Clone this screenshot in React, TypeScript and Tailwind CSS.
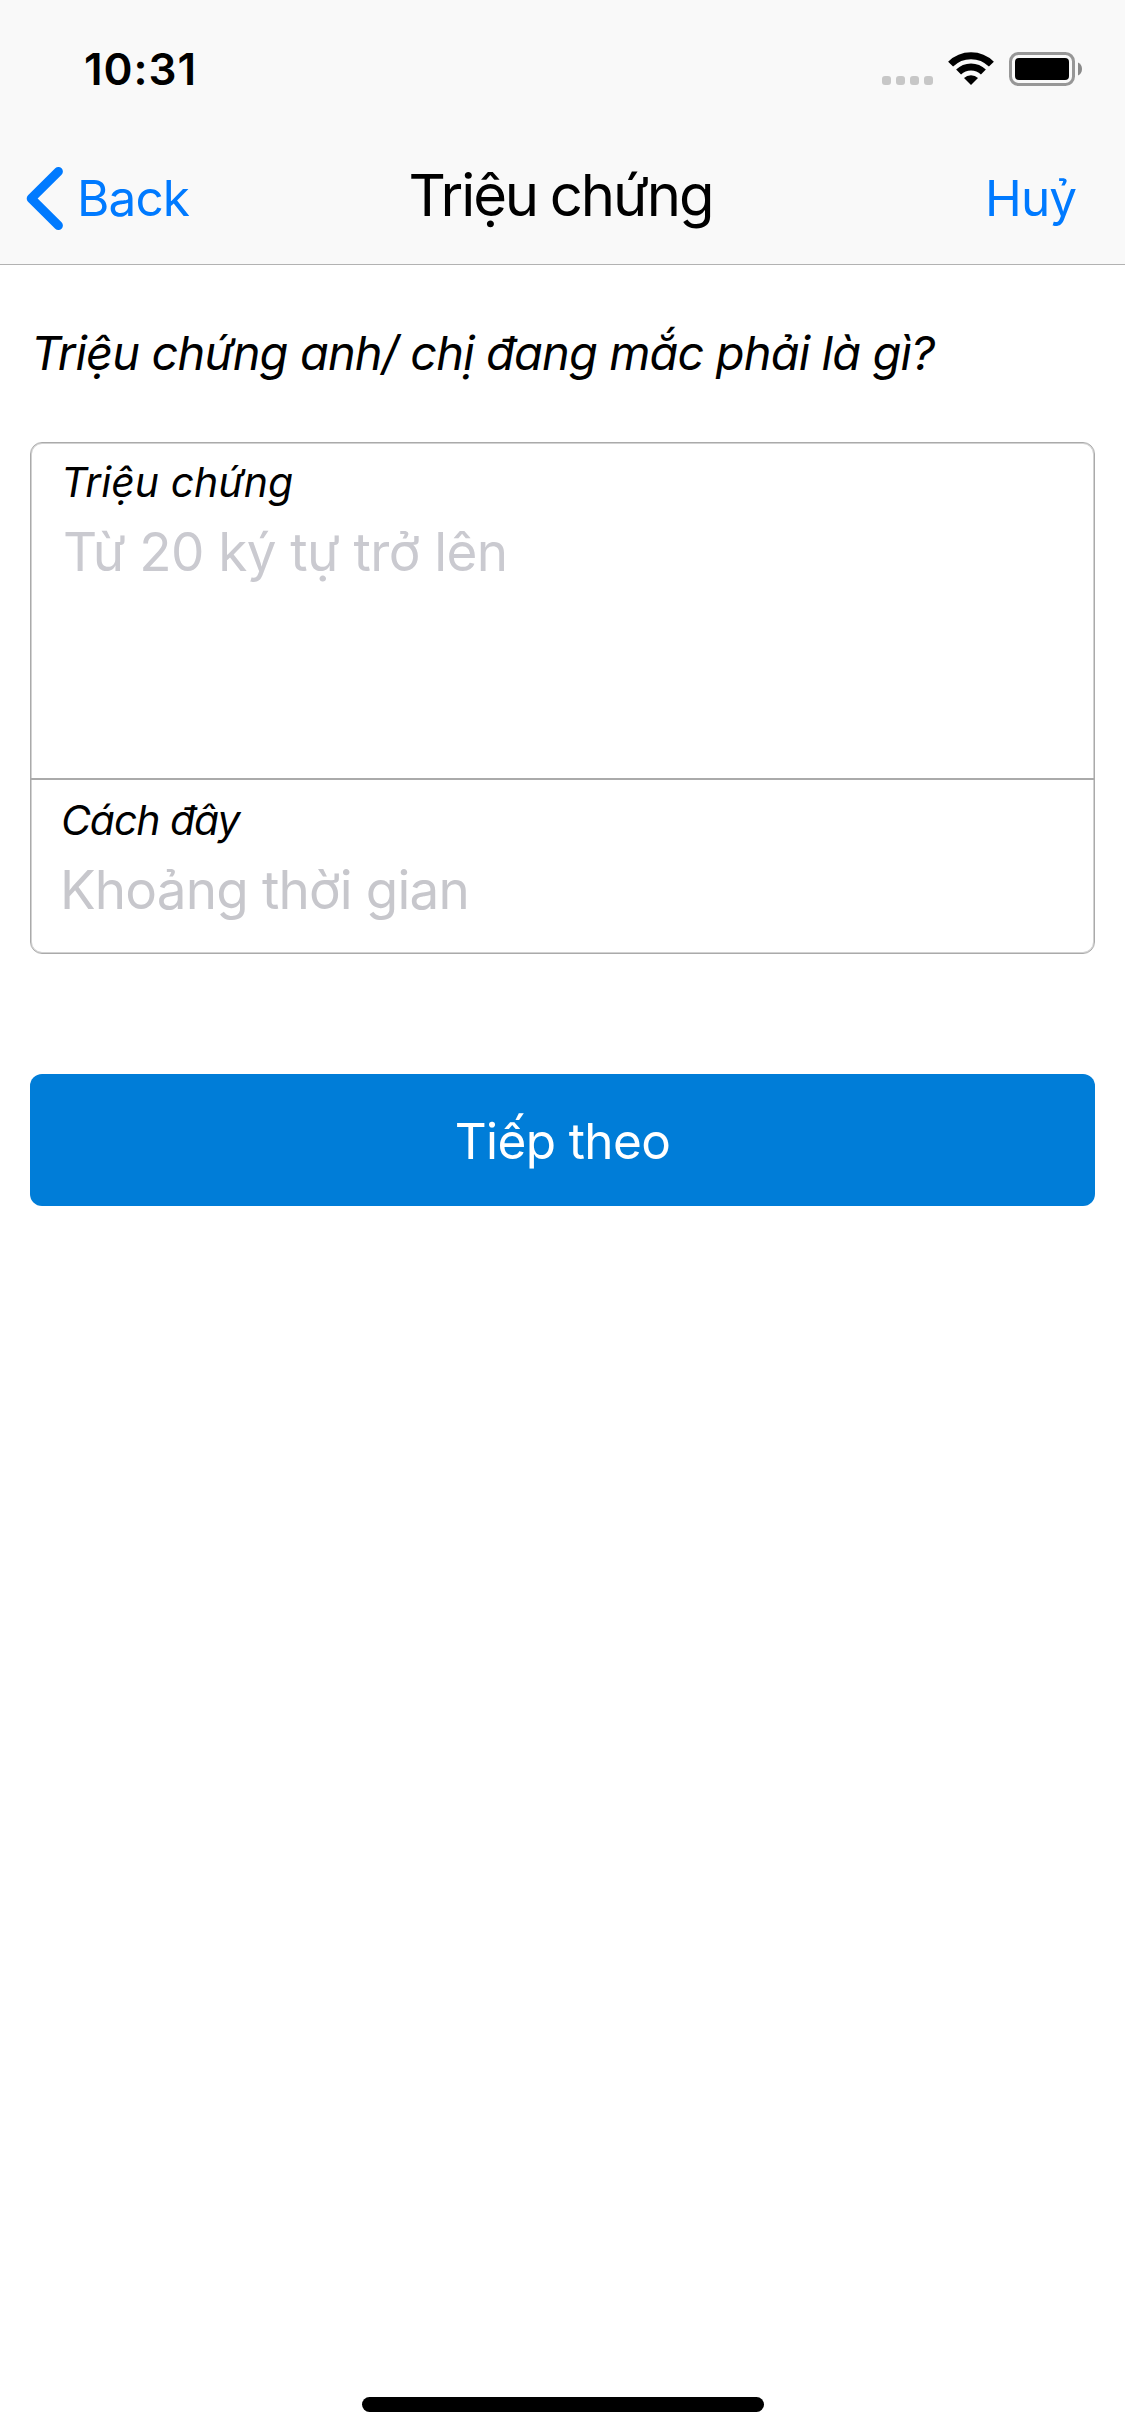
function SignalDots() {
  return (
    <div className="flex h-[34px] items-end gap-[5px] pb-px">
      <span className="size-[9px] rounded-[3px] bg-[#c7c7c7]" />
      <span className="size-[9px] rounded-[3px] bg-[#c7c7c7]" />
      <span className="size-[9px] rounded-[3px] bg-[#c7c7c7]" />
      <span className="size-[9px] rounded-[3px] bg-[#c7c7c7]" />
    </div>
  );
}

function WifiIcon() {
  return (
    <svg width="46" height="34" viewBox="0 0 46 34" fill="none">
      <path d="M2.6 12.1A28.8 28.8 0 0 1 43.4 12.1" stroke="#000" strokeWidth="7" />
      <path d="M10.6 20.1A17.6 17.6 0 0 1 35.4 20.1" stroke="#000" strokeWidth="7" />
      <path d="M23 33L16 26A10 10 0 0 1 30 26Z" fill="#000" />
    </svg>
  );
}

function BatteryIcon() {
  return (
    <svg width="73" height="34" viewBox="0 0 73 34" fill="none">
      <rect x="1.5" y="1.5" width="63" height="31" rx="8" stroke="#979797" strokeWidth="3" />
      <rect x="6" y="6" width="54" height="22" rx="4" fill="#000" />
      <path d="M69 10.5C71.5 11.5 73 14 73 17S71.5 22.5 69 23.5Z" fill="#8a8a8a" />
    </svg>
  );
}

function BackChevron() {
  return (
    <svg width="38" height="66" viewBox="0 0 38 66" fill="none">
      <path
        d="M32.4 6.5L5.2 33.5L32.4 60.5"
        stroke="#007aff"
        strokeWidth="9"
        strokeLinecap="round"
        strokeLinejoin="round"
      />
    </svg>
  );
}

export default function App() {
  return (
    <div className="flex h-[2436px] w-[1125px] flex-col bg-white font-['Inter',sans-serif] text-black">
      <header className="h-[265px] border-b border-[#b2b2b2] bg-[#f9f9f9]">
        <div className="flex h-[132px] items-center justify-between pt-[6px] pr-[43px] pl-[84px]">
          <span className="text-[44px] leading-[52px] font-semibold tracking-[0.96px]">10:31</span>
          <div className="flex items-center gap-[15px]">
            <SignalDots />
            <WifiIcon />
            <BatteryIcon />
          </div>
        </div>
        <nav className="grid h-[132px] grid-cols-[1fr_auto_1fr] items-center text-[49.5px] leading-[60px] text-[#007aff]">
          <button className="flex items-center gap-[13px] pl-[26px]">
            <BackChevron />
            <span className="tracking-[-0.9px]">Back</span>
          </button>
          <h1 className="pr-[4px] pb-[6px] text-[58px] leading-[70px] tracking-[-2.1px] text-black [word-spacing:-1.5px]">
            Triệu chứng
          </h1>
          <button className="justify-self-end pr-[49px] tracking-[-1px]">Huỷ</button>
        </nav>
      </header>

      <main className="flex flex-col px-[30px] pt-[58px]">
        <p className="pl-px text-[47px] leading-[60px] tracking-[-0.863px] whitespace-nowrap italic">
          Triệu chứng anh/ chị đang mắc phải là gì?
        </p>

        <div className="mt-[59px] h-[512px] rounded-[12px] border border-[#aaaaaa] shadow-[inset_0_0_0_1px_#d2d2d2]">
          <div className="h-[337px] border-b-2 border-[#aaaaaa] pt-[14px]">
            <div className="pl-[30px] text-[41px] leading-[50px] italic">Triệu chứng</div>
            <div className="mt-[13px] pl-[32px] text-[53px] leading-[64px] tracking-[-0.587px] text-[#cacad0]">
              Từ 20 ký tự trở lên
            </div>
          </div>
          <div className="pt-[15px]">
            <div className="pl-[30px] text-[41px] leading-[50px] tracking-[-1.07px] italic">Cách đây</div>
            <div className="mt-[13px] pl-[29px] text-[53px] leading-[64px] tracking-[-0.825px] text-[#c7c7cc]">
              Khoảng thời gian
            </div>
          </div>
        </div>

        <button className="mt-[120px] h-[132px] rounded-[12px] bg-[#007dd8] pt-[2px] text-[49.5px] leading-[60px] tracking-[-0.62px] text-white">
          Tiếp theo
        </button>
      </main>

      <div className="mx-auto mt-auto mb-[24px] h-[15px] w-[402px] rounded-full bg-black" />
    </div>
  );
}
